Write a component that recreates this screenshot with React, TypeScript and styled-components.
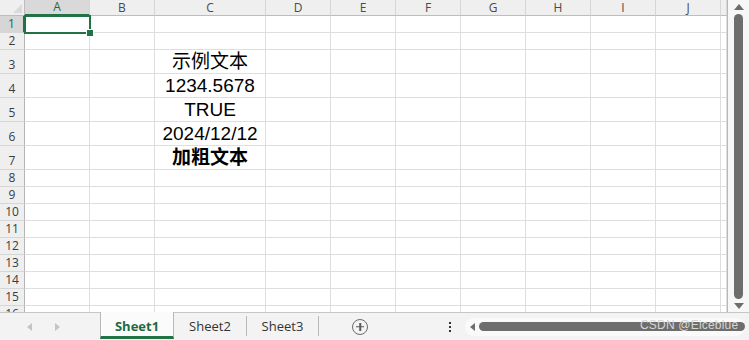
import styled, { createGlobalStyle } from "styled-components";

const GlobalStyle = createGlobalStyle`
	html, body {
		margin: 0;
		padding: 0;
		background: #ffffff;
	}
	body {
		font-family: "Liberation Sans", "Noto Sans CJK SC", sans-serif;
	}
`;

const COLS = ["", "A", "B", "C", "D", "E", "F", "G", "H", "I", "J", ""];
const ROW_HEIGHTS = [17, 17, 24, 24, 24, 24, 24, 17, 17, 17, 17, 17, 17, 17, 17, 17];

const cellData: Record<number, { text: string; bold?: boolean }> = {
	3: { text: "示例文本" },
	4: { text: "1234.5678" },
	5: { text: "TRUE" },
	6: { text: "2024/12/12" },
	7: { text: "加粗文本", bold: true },
};

const Frame = styled.div`
	width: 749px;
	height: 340px;
	display: flex;
	flex-direction: column;
	overflow: hidden;
	background: #ffffff;
`;

const Top = styled.div`
	display: flex;
	height: 312px;
`;

const Sheet = styled.div`
	position: relative;
	width: 728px;
	height: 312px;
	overflow: hidden;
	border-right: 1px solid #b8b8b8;
	box-sizing: border-box;
	display: grid;
	grid-template-columns: 25px 65px 65px 111px repeat(7, 65px) 1fr;
	grid-template-rows: 16px ${ROW_HEIGHTS.map((h) => `${h}px`).join(" ")};
	align-content: start;
`;

const Corner = styled.div`
	position: relative;
	background: #efefef;
	border-right: 1px solid #bdbdbd;
	border-bottom: 1px solid #bdbdbd;
	box-sizing: border-box;

	&::after {
		content: "";
		position: absolute;
		right: 2px;
		bottom: 2px;
		border-left: 9px solid transparent;
		border-bottom: 9px solid #dadada;
	}
`;

const ColHead = styled.div<{ $active?: boolean }>`
	background: ${(p) => (p.$active ? "#d9d9d9" : "#efefef")};
	border-right: 1px solid #d6d6d6;
	border-bottom: ${(p) => (p.$active ? "2px solid #217346" : "1px solid #bdbdbd")};
	box-sizing: border-box;
	display: flex;
	align-items: center;
	justify-content: center;
	font-family: "Open Sans", "Liberation Sans", sans-serif;
	font-size: 12px;
	color: ${(p) => (p.$active ? "#1a6b3f" : "#4a4a4a")};
	line-height: 1;
`;

const RowHead = styled.div<{ $active?: boolean }>`
	background: ${(p) => (p.$active ? "#d6d6d6" : "#efefef")};
	border-right: ${(p) => (p.$active ? "2px solid #217346" : "1px solid #b5b5b5")};
	border-bottom: 1px solid #d6d6d6;
	box-sizing: border-box;
	display: flex;
	align-items: flex-end;
	justify-content: center;
	padding-bottom: 0px;
	font-family: "Open Sans", "Liberation Sans", sans-serif;
	font-size: 12px;
	color: ${(p) => (p.$active ? "#1a6b3f" : "#3c3c3c")};
	line-height: 16px;
`;

const Cell = styled.div<{ $bold?: boolean }>`
	border-right: 1px solid #dedede;
	border-bottom: 1px solid #dedede;
	box-sizing: border-box;
	display: flex;
	align-items: flex-end;
	justify-content: center;
	white-space: nowrap;
	overflow: visible;
	font-family: "Liberation Sans", "Noto Sans CJK SC", sans-serif;
	font-size: 19px;
	font-weight: ${(p) => (p.$bold ? 700 : 400)};
	color: #000000;
	line-height: 22px;
`;

const Selection = styled.div`
	position: absolute;
	left: 24px;
	top: 15px;
	width: 67px;
	height: 19px;
	border: 2px solid #217346;
	box-sizing: border-box;

	&::after {
		content: "";
		position: absolute;
		right: -5px;
		bottom: -5px;
		width: 6px;
		height: 6px;
		background: #217346;
		border: 1px solid #ffffff;
	}
`;

const VScroll = styled.div`
	width: 21px;
	display: flex;
	flex-direction: column;
	align-items: center;
	padding: 4px 0 3px;
	box-sizing: border-box;
	background: #f7f7f7;
	gap: 4px;
`;

const VThumb = styled.div`
	flex: 1;
	width: 9px;
	border-radius: 5px;
	background: #6d6d6d;
`;

const Arrow = styled.div<{ $dir: "up" | "down" | "left" | "right"; $color?: string }>`
	width: 0;
	height: 0;
	flex: none;
	${(p) =>
		p.$dir === "up"
			? `border-left: 5px solid transparent; border-right: 5px solid transparent; border-bottom: 6px solid ${p.$color || "#6d6d6d"};`
			: p.$dir === "down"
			? `border-left: 5px solid transparent; border-right: 5px solid transparent; border-top: 6px solid ${p.$color || "#6d6d6d"};`
			: p.$dir === "left"
			? `border-top: 4px solid transparent; border-bottom: 4px solid transparent; border-right: 5px solid ${p.$color || "#6d6d6d"};`
			: `border-top: 4px solid transparent; border-bottom: 4px solid transparent; border-left: 5px solid ${p.$color || "#6d6d6d"};`}
`;

const TabBar = styled.div`
	position: relative;
	height: 28px;
	display: flex;
	align-items: stretch;
	background: #f3f3f3;
	border-top: 1px solid #c6c6c6;
	box-sizing: border-box;
`;

const NavArrows = styled.div`
	width: 100px;
	display: flex;
	align-items: center;
	gap: 23px;
	padding-left: 27px;
	box-sizing: border-box;
`;

const Tab = styled.div<{ $active?: boolean; $width: number }>`
	width: ${(p) => p.$width}px;
	display: flex;
	align-items: center;
	justify-content: center;
	box-sizing: border-box;
	font-family: "Open Sans", "Liberation Sans", sans-serif;
	font-size: 13px;
	font-weight: ${(p) => (p.$active ? 700 : 400)};
	color: ${(p) => (p.$active ? "#1e6b41" : "#333333")};
	background: ${(p) => (p.$active ? "#fbfbfb" : "transparent")};
	border-left: ${(p) => (p.$active ? "1px solid #b8b8b8" : "none")};
	border-right: 1px solid #b8b8b8;
	border-bottom: ${(p) => (p.$active ? "3px solid #217346" : "none")};
	margin-top: ${(p) => (p.$active ? "-1px" : "3px")};
	margin-bottom: ${(p) => (p.$active ? "1px" : "4px")};
	padding-top: ${(p) => (p.$active ? "3px" : "0")};
`;

const AddButton = styled.div`
	width: 16px;
	height: 16px;
	margin: auto 0 auto 33px;
	border: 1.5px solid #6a6a6a;
	border-radius: 50%;
	box-sizing: border-box;
	position: relative;
	flex: none;

	&::before,
	&::after {
		content: "";
		position: absolute;
		background: #5a5a5a;
		left: 50%;
		top: 50%;
		transform: translate(-50%, -50%);
	}
	&::before {
		width: 8px;
		height: 1.5px;
	}
	&::after {
		width: 1.5px;
		height: 8px;
	}
`;

const Dots = styled.div`
	margin-left: 81px;
	display: flex;
	flex-direction: column;
	justify-content: center;
	gap: 2px;

	span {
		width: 2px;
		height: 2px;
		background: #333;
	}
`;

const HScroll = styled.div`
	margin-left: 14px;
	width: 280px;
	height: 18px;
	align-self: center;
	display: flex;
	align-items: center;
	gap: 4px;
	padding-left: 5px;
	border-radius: 9px;
	background: #fafafa;
	box-sizing: border-box;
`;

const HThumb = styled.div`
	flex: 1;
	height: 9px;
	border-radius: 5px;
	background: #6d6d6d;
`;

const Watermark = styled.div`
	position: absolute;
	left: 640px;
	top: 5px;
	font-family: "Liberation Sans", sans-serif;
	font-size: 12px;
	color: #d6d6d6;
	letter-spacing: 0.2px;
`;

export default function App() {
	return (
		<>
			<GlobalStyle />
			<Frame>
				<Top>
					<Sheet>
						{COLS.map((c, i) =>
							i === 0 ? <Corner key="corner" /> : <ColHead key={`h${i}`} $active={c === "A"}>{c}</ColHead>
						)}
						{ROW_HEIGHTS.map((_, r) => {
							const row = r + 1;
							return COLS.map((_, i) => {
								if (i === 0) {
									return (
										<RowHead key={`r${row}`} $active={row === 1}>
											{row}
										</RowHead>
									);
								}
								const data = i === 3 ? cellData[row] : undefined;
								return (
									<Cell key={`c${row}-${i}`} $bold={data?.bold}>
										{data?.text}
									</Cell>
								);
							});
						})}
						<Selection />
					</Sheet>
					<VScroll>
						<Arrow $dir="up" />
						<VThumb />
						<Arrow $dir="down" />
					</VScroll>
				</Top>
				<TabBar>
					<NavArrows>
						<Arrow $dir="left" $color="#c4c4c4" />
						<Arrow $dir="right" $color="#c4c4c4" />
					</NavArrows>
					<Tab $active $width={74}>Sheet1</Tab>
					<Tab $width={73}>Sheet2</Tab>
					<Tab $width={72}>Sheet3</Tab>
					<AddButton />
					<Dots>
						<span />
						<span />
						<span />
					</Dots>
					<HScroll>
						<Arrow $dir="left" />
						<HThumb />
					</HScroll>
					<Watermark>CSDN @Eiceblue</Watermark>
				</TabBar>
			</Frame>
		</>
	);
}
